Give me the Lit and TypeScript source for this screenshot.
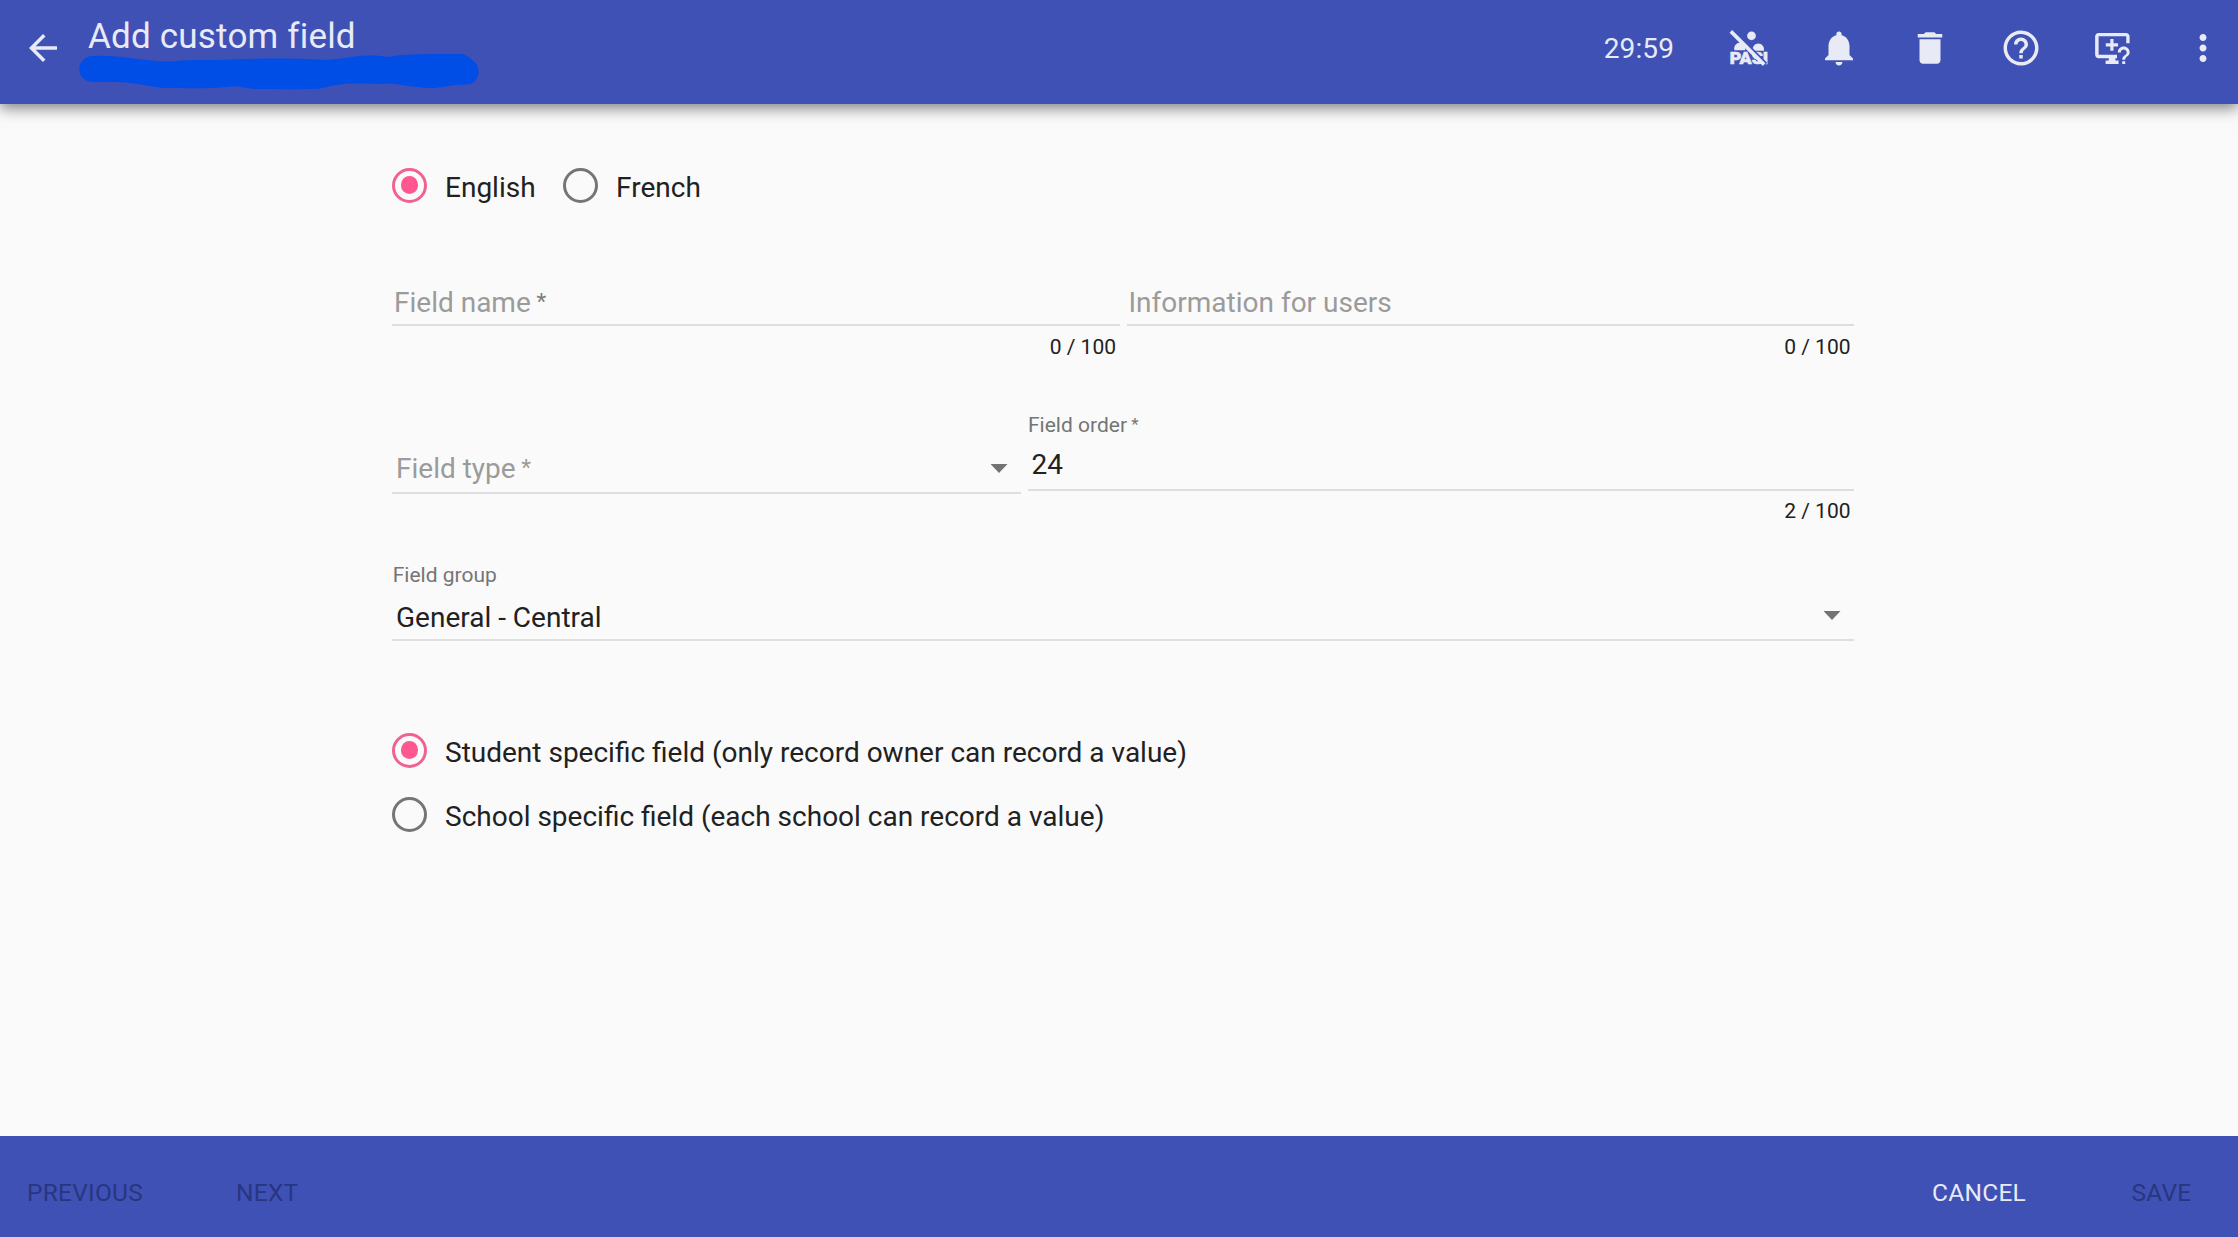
import { LitElement, html, css, svg } from "lit";
import { customElement, property } from "lit/decorators.js";

@customElement("app-icon")
class AppIcon extends LitElement {
  @property() name = "";
  static styles = css`
    :host { display: block; width: 42px; height: 42px; }
    svg { display: block; width: 100%; height: 100%; fill: currentColor; }
    .pas { font: 900 9.4px Roboto, sans-serif; letter-spacing: 0; stroke: currentColor; stroke-width: .35; }
    .gap { fill: none; stroke: #3f51b5; stroke-width: 2.2; }
    .slash { fill: none; stroke: currentColor; stroke-width: 2.1; }
  `;
  private shapes() {
    switch (this.name) {
      case "back":
        return svg`<path d="M20 11H7.83l5.59-5.59L12 4l-8 8 8 8 1.41-1.41L7.83 13H20v-2z"/>`;
      case "bell":
        return svg`<path d="M12 22c1.1 0 2-.9 2-2h-4c0 1.1.89 2 2 2zm6-6v-5c0-3.07-1.64-5.64-4.5-6.32V4c0-.83-.67-1.5-1.5-1.5s-1.5.67-1.5 1.5v.68C7.63 5.36 6 7.92 6 11v5l-2 2v1h16v-1l-2-2z"/>`;
      case "delete":
        return svg`<path d="M6 19c0 1.1.9 2 2 2h8c1.1 0 2-.9 2-2V7H6v12zM19 4h-3.5l-1-1h-5l-1 1H5v2h14V4z"/>`;
      case "help":
        return svg`<path d="M11 18h2v-2h-2v2zm1-16C6.48 2 2 6.48 2 12s4.48 10 10 10 10-4.48 10-10S17.52 2 12 2zm0 18c-4.41 0-8-3.59-8-8s3.59-8 8-8 8 3.59 8 8-3.59 8-8 8zm0-14c-2.21 0-4 1.79-4 4h2c0-1.1.9-2 2-2s2 .9 2 2c0 2-3 1.75-3 5h2c0-2.25 3-2.5 3-5 0-2.21-1.79-4-4-4z"/>`;
      case "more":
        return svg`<path d="M12 8c1.1 0 2-.9 2-2s-.9-2-2-2-2 .9-2 2 .9 2 2 2zm0 2c-1.1 0-2 .9-2 2s.9 2 2 2 2-.9 2-2-.9-2-2-2zm0 6c-1.1 0-2 .9-2 2s.9 2 2 2 2-.9 2-2-.9-2-2-2z"/>`;
      case "monitor":
        return svg`<g transform="translate(.35 0)">
          <path d="M4 3.4h15.700c1.100 0 2 .9 2 2v3.900h-1.900V5.300H4v10.600h10.500v2h-.9v1.300h1.800v1.900H8v-1.900h1.800v-1.300H4c-1.100 0-2-.9-2-2V5.400c0-1.100.9-2 2-2z"/>
          <path d="M10.700 6.800h1.800v2.500h2.600v1.800h-2.600v2.500h-1.800v-2.500H8.100V9.300h2.600z"/>
          <path d="M17.500 19.500h1.700v1.600h-1.700zM18.350 11.200c-1.900 0-3.400 1.500-3.400 3.400h1.700c0-1 .8-1.700 1.700-1.700s1.700.8 1.700 1.700c0 1.700-2.550 1.500-2.550 4.100h1.700c0-1.900 2.550-2.100 2.550-4.100 0-1.900-1.500-3.400-3.400-3.400z"/></g>`;
      default:
        return svg`
          <circle cx="14" cy="5" r="2.500"/>
          <path d="M4.300 13.300a3.200 3.200 0 1 1 6 0z"/>
          <path d="M14.700 13.600a3.300 3.300 0 1 1 6.400 0z"/>
          <text class="pas" x="1.500" y="21" textLength="22" lengthAdjust="spacingAndGlyphs">PASI</text>
          <path class="gap" d="M3.100 2.100 22.200 21.200"/>
          <path class="slash" d="M2.200 2.500 21.200 21.500"/>`;
    }
  }
  render() { return html`<svg viewBox="0 0 24 24">${this.shapes()}</svg>`; }
}

@customElement("app-radio")
class AppRadio extends LitElement {
  @property({ type: Boolean }) checked = false;
  static styles = css`
    :host { display: flex; align-items: center; height: 42px; gap: 18px; }
    .ring { box-sizing: border-box; width: 35px; height: 35px; border: 3.5px solid #757575; border-radius: 50%; display: grid; place-items: center; }
    .ring.on { border-color: #f0628f; }
    .dot { width: 17.5px; height: 17.5px; border-radius: 50%; background: #ff5790; }
    .label { line-height: 42px; padding-top: 6px; }
  `;
  render() {
    return html`<span class="ring ${this.checked ? "on" : ""}">${this.checked ? html`<span class="dot"></span>` : ""}</span>
      <span class="label"><slot></slot></span>`;
  }
}

@customElement("app-root")
class AppRoot extends LitElement {
  static styles = css`
    :host { display: flex; flex-direction: column; height: 1237px; background: #fafafa; color: #212121;
      font: 400 28px Roboto, sans-serif; }
    .top { flex: none; height: 104px; box-sizing: border-box; display: flex; padding: 0 14px 0 22px; background: #3f51b5; color: #e8eaf6;
      box-shadow: 0 3.5px 14px rgba(0,0,0,.5); }
    .back { margin-top: 27px; }
    .heading { margin-left: 15px; width: 402px; }
    .title { margin: 15px 0 0 9px; font-size: 35px; line-height: 43px; letter-spacing: .2px; }
    .scribble { display: block; width: 402px; height: 38px; margin-top: -5px; fill: #004ee6; }
    .actions { margin-left: auto; display: flex; align-items: center; height: 96px; }
    .actions app-icon { margin-left: 49px; }
    .time { margin-right: 4px; letter-spacing: .1px; }
    .form { flex: 1; width: 1462px; margin-left: 392px; }
    .radios { display: flex; gap: 27.5px; padding-top: 60px; height: 42px; }
    .row { display: flex; gap: 7px; }
    .field { flex: 1; min-width: 0; }
    .box { display: flex; justify-content: space-between; border-bottom: 2px solid #dedede; box-sizing: border-box; padding: 0 13.5px 0 4px; line-height: 37px; white-space: pre; }
    .hint { color: #9b9b9b; }
    .star { font-size: .8125em; line-height: 0; vertical-align: .14em; }
    .dark { color: #7d7d7d; }
    .small { font-size: 21px; line-height: 26px; color: #757575; white-space: pre; }
    .count { font-size: 21px; line-height: 28px; text-align: right; padding: 7px 3.5px 0 0; }
    .arrow { width: 17px; height: 9px; background: #737373; clip-path: polygon(0 0, 100% 0, 50% 100%); }
    .r1 { padding-top: 72px; }
    .r1 .box { height: 48px; padding: 6px 0 0 2px; }
    .r2 { padding-top: 51px; height: 114px; }
    .type { flex: 0 0 629px; padding-top: 34px; }
    .type .box { height: 48px; padding-top: 4px; }
    .type .arrow { margin-top: 14px; }
    .order .box { height: 53px; padding: 8px 0 0 3.5px; }
    .order .count { padding-top: 6px; }
    .r3 { padding-top: 36px; }
    .r3 .small { padding-left: .7px; }
    .r3 .box { height: 53px; padding-top: 11px; }
    .r3 .arrow { margin-top: 12px; }
    .owner { padding-top: 88px; display: grid; gap: 22px; }
    .bottom { flex: none; height: 101px; display: flex; box-sizing: border-box; padding: 36px 46.5px 0 27px; background: #3f51b5; color: #283680; font-size: 24.5px; line-height: 42px; letter-spacing: .245px; }
    .next { margin-left: 93px; }
    .cancel { margin-left: auto; margin-right: 105.5px; color: #e8eaf6; }
  `;
  render() {
    return html`
      <header class="top">
        <app-icon class="back" name="back"></app-icon>
        <div class="heading">
          <div class="title">Add custom field</div>
          <svg class="scribble" viewBox="79 53 402 38"><path d="M92 56C107 55 119 57 130 58C146 60 164 62 174 61.500C183 59 209 61 240 59C266 58.500 298 58 326 60C343 59 347 57 359 56C372 55 382 56 390 57C399 54 423 54 460 54C467 54 469 58 475 62C480 69 480 76 474 82C469 86 463 84 456 85C446 86 439 88 430 88C415 88 402 84 388 83.500C374 85 351 82 338 85C326 86 324 89 314 89C292 89.500 275 89 257 89C248 89 242 86 230 86.500C214 89 185 88 165 88C153 87 139 84 126 82.500C114 82 100 82 92 82C75 80 75 58 92 56Z"/></svg>
        </div>
        <div class="actions">
          <span class="time">29:59</span>
          ${["pasi", "bell", "delete", "help", "monitor", "more"].map((n) => html`<app-icon name=${n}></app-icon>`)}
        </div>
      </header>
      <main class="form">
        <div class="radios"><app-radio checked>English</app-radio><app-radio>French</app-radio></div>
        <div class="row r1">
          <div class="field"><div class="box"><span class="hint">Field name<span class="star dark"> *</span></span></div><div class="count">0 / 100</div></div>
          <div class="field"><div class="box"><span class="hint">Information for users</span></div><div class="count">0 / 100</div></div>
        </div>
        <div class="row r2">
          <div class="field type"><div class="box"><span class="hint">Field type<span class="star"> *</span></span><span class="arrow"></span></div></div>
          <div class="field order"><div class="small">Field order<span class="star"> *</span></div><div class="box">24</div><div class="count">2 / 100</div></div>
        </div>
        <div class="r3"><div class="small">Field group</div><div class="box"><span>General - Central</span><span class="arrow"></span></div></div>
        <div class="owner">
          <app-radio checked>Student specific field (only record owner can record a value)</app-radio>
          <app-radio>School specific field (each school can record a value)</app-radio>
        </div>
      </main>
      <footer class="bottom"><span>PREVIOUS</span><span class="next">NEXT</span><span class="cancel">CANCEL</span><span>SAVE</span></footer>`;
  }
}
